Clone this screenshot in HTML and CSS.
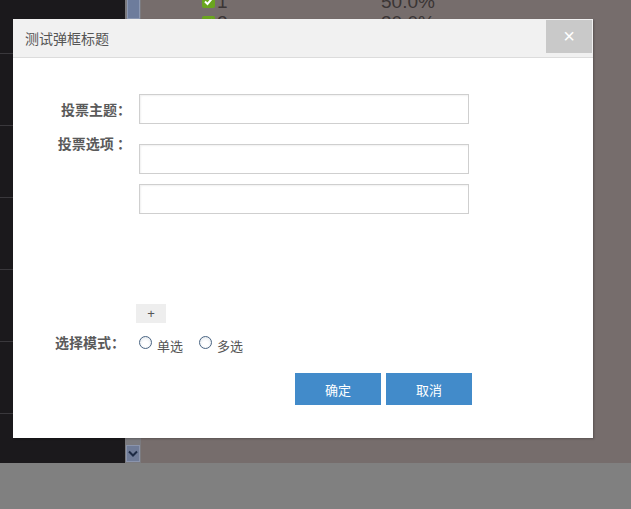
FILE: index.html
```html
<!DOCTYPE html>
<html lang="zh-CN">
<head>
  <meta charset="UTF-8">
  <meta name="viewport" content="width=device-width, initial-scale=1.0">
  <title>投票</title>
  <link rel="stylesheet" href="styles.css">
</head>
<body>
  <div class="page">
    <div class="sidebar">
      <div class="side-item"></div>
      <div class="side-item"></div>
      <div class="side-item"></div>
      <div class="side-item"></div>
      <div class="side-item"></div>
      <div class="side-item"></div>
      <div class="side-item"></div>
    </div>
    <div class="scrollbar">
      <div class="thumb"></div>
      <div class="track"></div>
      <div class="arrow-down">
        <svg width="10" height="7" viewBox="0 0 10 7"><path d="M1 1.5 L5 5.5 L9 1.5" fill="none" stroke="#1d2a44" stroke-width="2"/></svg>
      </div>
    </div>
    <div class="main">
      <div class="result-row">
        <span class="check"><svg width="13" height="13" viewBox="0 0 13 13"><path d="M3 6.5 L5.5 9 L10 3.5" fill="none" stroke="#fff" stroke-width="2"/></svg></span><span class="opt-name">1</span><span class="opt-pct">50.0%</span>
      </div>
      <div class="result-row">
        <span class="check"><svg width="13" height="13" viewBox="0 0 13 13"><path d="M3 6.5 L5.5 9 L10 3.5" fill="none" stroke="#fff" stroke-width="2"/></svg></span><span class="opt-name">2</span><span class="opt-pct">30.0%</span>
      </div>
    </div>
  </div>
  <div class="footer-band"></div>

  <div class="dialog">
    <div class="dialog-header">
      <span class="dialog-title">测试弹框标题</span>
      <button class="dialog-close">×</button>
    </div>
    <div class="dialog-body">
      <div class="form-row">
        <label class="form-label">投票主题：</label>
        <input class="text-input" type="text">
      </div>
      <div class="form-row options-row">
        <label class="form-label label-top">投票选项 ：</label>
        <div class="option-list">
          <input class="text-input" type="text">
          <input class="text-input" type="text">
        </div>
      </div>
      <div class="add-row">
        <button class="add-btn">+</button>
      </div>
      <div class="form-row mode-row">
        <label class="form-label label-top label-short">选择模式：</label>
        <label class="radio"><input type="radio" name="mode"><span>单选</span></label>
        <label class="radio"><input type="radio" name="mode"><span>多选</span></label>
      </div>
      <div class="actions">
        <button class="btn">确定</button>
        <button class="btn">取消</button>
      </div>
    </div>
  </div>
</body>
</html>
```

FILE: styles.css
```css
body {
  margin: 0;
  padding: 0;
  width: 631px;
  height: 509px;
  overflow: hidden;
  font-family: "Noto Sans CJK SC", "Liberation Sans", sans-serif;
  position: relative;
}

.page {
  display: flex;
  height: 463px;
  overflow: hidden;
}

.sidebar {
  width: 125px;
  background: #1b191c;
  margin-top: -18px;
}

.side-item {
  height: 71px;
  border-bottom: 1px solid #3a383c;
}

.scrollbar {
  width: 16px;
  display: flex;
  flex-direction: column;
  background: #7b7a7e;
}

.thumb {
  height: 18px;
  margin: 0 1px 0 2px;
  background: #6d7c9c;
  border: 1px solid #8c98b2;
  border-top: none;
}

.track {
  flex: 1;
}

.arrow-down {
  height: 15px;
  margin: 0 1px 1px 1px;
  background: #6f7b97;
  border: 1px solid #8a94ac;
  display: flex;
  align-items: center;
  justify-content: center;
}

.main {
  flex: 1;
  background: #766d6c;
  padding-left: 61px;
  margin-top: -9px;
}

.result-row {
  display: flex;
  align-items: center;
  height: 21px;
  font-family: "Liberation Sans", sans-serif;
  font-size: 19px;
  color: #3b3535;
}

.check {
  display: flex;
  width: 13px;
  height: 13px;
  background: #6aa51e;
  border-radius: 2px;
  margin-right: 2px;
}

.opt-name {
  width: 164px;
}

.footer-band {
  height: 46px;
  background: #808080;
}

.dialog {
  position: absolute;
  left: 13px;
  top: 19px;
  width: 580px;
  height: 419px;
  background: #fff;
  box-shadow: 1px 1px 2px rgba(0, 0, 0, 0.25);
}

.dialog-header {
  height: 38px;
  background: #f1f1f1;
  border-bottom: 1px solid #dcdcdc;
  display: flex;
  align-items: center;
  justify-content: space-between;
}

.dialog-title {
  padding-left: 12px;
  font-size: 14px;
  color: #555;
}

.dialog-close {
  align-self: flex-start;
  margin: 1px 1px 0 0;
  width: 46px;
  height: 33px;
  border: none;
  background: #c9c9c9;
  color: #fff;
  font-size: 20px;
  line-height: 33px;
  padding: 0;
  font-family: "Liberation Sans", sans-serif;
}

.dialog-body {
  padding-top: 36px;
}

.form-row {
  display: flex;
  align-items: flex-start;
}

.form-label {
  width: 118px;
  text-align: right;
  font-size: 14px;
  font-weight: bold;
  color: #5a5a5a;
  line-height: 30px;
  flex-shrink: 0;
}

.label-top {
  line-height: 20px;
}

.label-short {
  width: 112px;
}

.text-input {
  display: block;
  box-sizing: border-box;
  width: 330px;
  height: 30px;
  margin: 0 0 0 8px;
  border: 1px solid #cfcfcf;
  box-shadow: inset 1px 1px 2px rgba(0, 0, 0, 0.06);
  background: #fff;
  padding: 0 6px;
}

.options-row {
  margin-top: 9px;
}

.option-list {
  padding-top: 11px;
  display: flex;
  flex-direction: column;
  gap: 10px;
}

.add-row {
  padding: 90px 0 0 123px;
}

.add-btn {
  display: block;
  width: 30px;
  height: 19px;
  border: none;
  background: #eeeeee;
  color: #555;
  font-size: 13px;
  line-height: 19px;
  padding: 0;
  font-family: "Liberation Sans", sans-serif;
}

.mode-row {
  margin-top: 9px;
}

.radio {
  display: flex;
  align-items: center;
  margin-left: 14px;
  font-size: 13px;
  color: #555;
  line-height: 20px;
}

.radio + .radio {
  margin-left: 16px;
}

.radio input {
  appearance: none;
  width: 13px;
  height: 13px;
  margin: 0 5px 3px 0;
  border: 1px solid #4a6482;
  border-radius: 50%;
  background: radial-gradient(circle at 50% 60%, #fff 30%, #dde3ea 100%);
  box-sizing: border-box;
}

.radio span {
  padding-top: 4px;
}

.actions {
  display: flex;
  gap: 5px;
  padding: 17px 0 0 282px;
}

.btn {
  width: 86px;
  height: 32px;
  border: none;
  background: #428bca;
  color: #fff;
  font-size: 13px;
  font-family: "Noto Sans CJK SC", sans-serif;
  padding: 0;
}
```
